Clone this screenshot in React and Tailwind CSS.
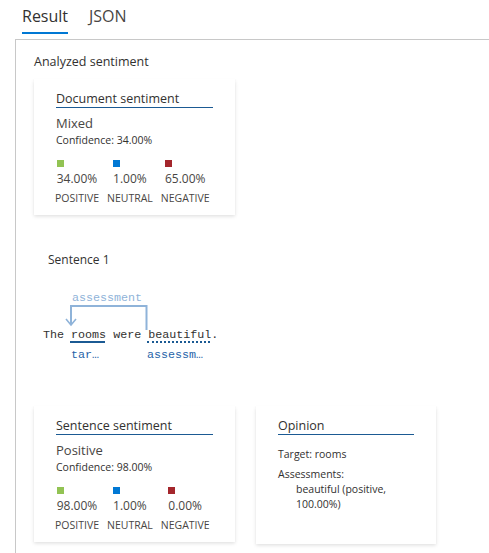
import React from "react";

const card =
  "bg-white shadow-[0_1.6px_3.6px_rgba(0,0,0,0.13),0_0.3px_0.9px_rgba(0,0,0,0.11)]";

function CardTitle({ children }) {
  return (
    <div className="text-[12.5px] leading-[17px] text-[#323130] border-b border-[#1b5a93]">
      {children}
    </div>
  );
}

function SentimentCard({ title, label, confidence, scores, className = "" }) {
  return (
    <div className={`${card} w-[201px] px-[22px] pt-[11px] pb-[10px] ${className}`}>
      <CardTitle>{title}</CardTitle>
      <div className="mt-[6px] text-[13px] leading-[18px] text-[#484644]">{label}</div>
      <div className="mt-[1px] text-[10.5px] leading-[14px] text-[#323130]">
        Confidence: {confidence}
      </div>
      <div className="mt-[13px] flex gap-[8px] -ml-[1px]">
        {scores.map((s) => (
          <div key={s.name} className="flex flex-col items-center">
            <div className="flex flex-col items-start">
              <div className={`w-[7px] h-[7px] ${s.color}`} />
              <div className="mt-[4px] text-[12px] leading-[16px] text-[#484644]">{s.value}</div>
            </div>
            <div className="mt-[4px] text-[10.5px] leading-[14px] text-[#484644]">{s.name}</div>
          </div>
        ))}
      </div>
    </div>
  );
}

export default function App() {
  const docScores = [
    { name: "POSITIVE", value: "34.00%", color: "bg-[#92c353]" },
    { name: "NEUTRAL", value: "1.00%", color: "bg-[#0078d4]" },
    { name: "NEGATIVE", value: "65.00%", color: "bg-[#a4262c]" },
  ];
  const sentScores = [
    { name: "POSITIVE", value: "98.00%", color: "bg-[#92c353]" },
    { name: "NEUTRAL", value: "1.00%", color: "bg-[#0078d4]" },
    { name: "NEGATIVE", value: "0.00%", color: "bg-[#a4262c]" },
  ];
  const mono = "font-['Liberation_Mono',monospace] text-[11.7px] leading-[14px]";

  return (
    <div className="w-[489px] h-[553px] bg-white overflow-hidden font-['Open_Sans',sans-serif] text-[#323130]">
      {/* tabs */}
      <div className="flex gap-[21px] pl-[22px] pt-[5px]">
        <div className="flex flex-col">
          <span className="text-[16px] leading-[22px] text-[#323130]">Result</span>
          <div className="mt-[5px] h-[2px] bg-[#0078d4]" />
        </div>
        <span className="text-[16px] leading-[22px] text-[#484644]">JSON</span>
      </div>

      <div className="ml-[15px] mt-[5px] border-l border-t border-[#c8c8c8] pl-[18px] pt-[13px] h-[600px]">
        <div className="text-[12.5px] leading-[18px]">Analyzed sentiment</div>

        <SentimentCard
          className="mt-[8px]"
          title="Document sentiment"
          label="Mixed"
          confidence="34.00%"
          scores={docScores}
        />

        <div className="mt-[37px] ml-[14px] text-[12px] leading-[16px] text-[#323130]">Sentence 1</div>

        {/* sentence diagram */}
        <div className="relative h-[138px]">
          <div className={`absolute left-[38px] top-[23px] ${mono} text-[#8fb3d9]`}>assessment</div>
          <svg className="absolute left-0 top-0" width="200" height="100" viewBox="0 0 200 100">
            <polyline
              points="37,57 37,38 112.5,38 112.5,62"
              fill="none"
              stroke="#8fb3d9"
              strokeWidth="2"
            />
            <polyline points="32,51 37,57 42,51" fill="none" stroke="#8fb3d9" strokeWidth="1.6" />
          </svg>
          <div className={`absolute left-[9px] top-[60px] ${mono} text-[#323130] whitespace-pre`}>
            The rooms were beautiful.
          </div>
          <div className="absolute left-[36px] top-[73px] w-[35px] h-[2px] bg-[#1b5a93]" />
          <div className="absolute left-[113px] top-[73px] w-[63px] border-b-2 border-dotted border-[#1b5a93]" />
          <div className={`absolute left-[37px] top-[80px] ${mono} text-[#1f63a8]`}>tar…</div>
          <div className={`absolute left-[113px] top-[80px] ${mono} text-[#1f63a8]`}>assessm…</div>
        </div>

        <div className="flex gap-[21px] items-start">
          <SentimentCard
            title="Sentence sentiment"
            label="Positive"
            confidence="98.00%"
            scores={sentScores}
          />
          <div className={`${card} w-[180px] h-[138px] px-[22px] pt-[11px]`}>
            <CardTitle>Opinion</CardTitle>
            <div className="mt-[12px] text-[10.5px] leading-[14px] text-[#323130]">Target: rooms</div>
            <div className="mt-[6px] text-[10.5px] leading-[15px] text-[#323130]">
              <div>Assessments:</div>
              <div className="ml-[18px]">beautiful (positive, 100.00%)</div>
            </div>
          </div>
        </div>
      </div>
    </div>
  );
}
